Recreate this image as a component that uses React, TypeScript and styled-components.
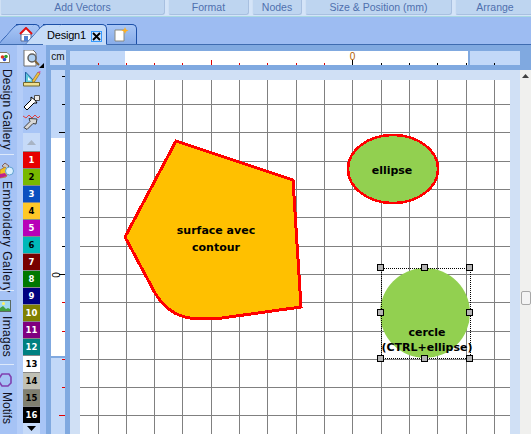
import React from 'react';
import styled, { createGlobalStyle } from 'styled-components';

const GlobalStyle = createGlobalStyle`
  html, body { margin: 0; padding: 0; background: #a0bef3; overflow: hidden; }
  #root { width: 531px; height: 434px; overflow: hidden; }
`;

const RIBBON_GROUPS = [
  { label: 'Add Vectors', width: 165 },
  { label: 'Format', width: 81 },
  { label: 'Nodes', width: 50 },
  { label: 'Size & Position (mm)', width: 147 },
  { label: 'Arrange', width: 80 },
];

const SWATCHES = [
  { n: 1, bg: '#e60000', fg: '#fff' },
  { n: 2, bg: '#78b800', fg: '#000' },
  { n: 3, bg: '#0a4fc0', fg: '#fff' },
  { n: 4, bg: '#ffc828', fg: '#000' },
  { n: 5, bg: '#b800b8', fg: '#fff' },
  { n: 6, bg: '#00b8b8', fg: '#000' },
  { n: 7, bg: '#780000', fg: '#fff' },
  { n: 8, bg: '#007800', fg: '#fff' },
  { n: 9, bg: '#000080', fg: '#fff' },
  { n: 10, bg: '#808000', fg: '#fff' },
  { n: 11, bg: '#800080', fg: '#fff' },
  { n: 12, bg: '#008080', fg: '#fff' },
  { n: 13, bg: '#ffffff', fg: '#000' },
  { n: 14, bg: '#c0c0b4', fg: '#000' },
  { n: 15, bg: '#808070', fg: '#000' },
  { n: 16, bg: '#000000', fg: '#fff' },
];

const GRID_X = [98, 126, 154, 182, 211, 239, 267, 296, 324, 352, 381, 409, 437, 466, 494];
const GRID_Y = [76, 104, 132, 161, 189, 217, 246, 274, 302, 331, 359, 387, 415];
const HANDLES = [[381, 267], [425, 267], [470, 267], [381, 312], [470, 312], [381, 358], [425, 358], [470, 358]];

export default function App() {
  return (
    <Page>
      <GlobalStyle />
      <RibbonLabels>
        {RIBBON_GROUPS.map(group => <RibbonLabel key={group.label} $width={group.width}>{group.label}</RibbonLabel>)}
      </RibbonLabels>
      <TabBand>
        <HomeTab><HomeIcon /></HomeTab>
        <DocumentTab>
          <span>Design1</span>
          <CloseButton>
            <svg width="9" height="9" viewBox="0 0 9 9"><path d="M1 1l7 7M8 1l-7 7" stroke="#000" strokeWidth="1.8" /></svg>
          </CloseButton>
        </DocumentTab>
        <NewTab><NewPageIcon /></NewTab>
      </TabBand>
      <Workspace>
        <GalleryRail>
          <RailItem $height={110} $top={7}>
            <DesignIcon />
            <RailLabel $spacing={0.15} $gap={6}>Design Gallery</RailLabel>
          </RailItem>
          <RailItem $height={136} $top={7}>
            <EmbroideryIcon />
            <RailLabel $spacing={0.5} $gap={2}>Embroidery Gallery</RailLabel>
          </RailItem>
          <RailItem $height={74} $top={9}>
            <ImagesIcon />
            <RailLabel $spacing={0.3} $gap={4}>Images</RailLabel>
          </RailItem>
          <RailItem $height={69} $top={8} $last>
            <MotifIcon />
            <RailLabel $spacing={0} $gap={5}>Motifs</RailLabel>
          </RailItem>
        </GalleryRail>
        <ToolColumn>
          <ToolButton $height={21}><ZoomToolIcon /></ToolButton>
          <ToolButton $height={22}><DrawToolIcon /></ToolButton>
          <ToolButton $height={20}><ArrowToolIcon /></ToolButton>
          <ToolButton $height={20}><NodeToolIcon /></ToolButton>
          <PaletteArrow $height={18}>
            <svg width="9" height="5" viewBox="0 0 9 5"><path d="M4.5 0l4.5 5H0z" fill="#a8b4c4" /></svg>
          </PaletteArrow>
          {SWATCHES.map(swatch => <Swatch key={swatch.n} $bg={swatch.bg} $fg={swatch.fg}>{swatch.n}</Swatch>)}
          <PaletteArrow $height={11}>
            <svg width="9" height="5" viewBox="0 0 9 5"><path d="M0 0h9L4.500 5z" fill="#000" /></svg>
          </PaletteArrow>
        </ToolColumn>
        <Editor>
          <Corner>cm</Corner>
          <HorizontalRuler />
          <VerticalRuler />
          <CanvasFrame>
            <DrawingSheet />
          </CanvasFrame>
          <ScrollBar>
            <ScrollArrow>
              <svg width="7" height="4" viewBox="0 0 7 4"><path d="M3.500 0L7 4H0z" fill="#404040" /></svg>
            </ScrollArrow>
            <ScrollThumb />
          </ScrollBar>
        </Editor>
      </Workspace>
    </Page>
  );
}

function HorizontalRuler() {
  return (
    <HRulerBox>
      <svg width="450" height="14" viewBox="70 51 450 14" shapeRendering="crispEdges">
        {GRID_X.map(x => (
          <line key={x} x1={x + 0.5} x2={x + 0.5} y1={x === 211 || x === 352 ? 60 : 63} y2={65} stroke={x < 352 ? '#e00000' : '#000'} />
        ))}
        <text x="352.500" y="60" textAnchor="middle" fontFamily="Liberation Sans, sans-serif" fontSize="10" fill="#b06000">0</text>
      </svg>
    </HRulerBox>
  );
}

function VerticalRuler() {
  return (
    <VRulerBox>
      <svg width="14" height="364" viewBox="51 70 14 364" shapeRendering="crispEdges">
        {GRID_Y.map(y => (
          <line key={y} x1={y === 132 || y === 274 || y === 415 ? 59 : 62} x2={65} y1={y + 0.5} y2={y + 0.5} stroke={y <= 274 ? '#000' : '#e00000'} />
        ))}
        <text transform="translate(60 275) rotate(-90)" textAnchor="middle" fontFamily="Liberation Sans, sans-serif" fontSize="10" fill="#000">0</text>
      </svg>
    </VRulerBox>
  );
}

function DrawingSheet() {
  return (
    <svg width="430" height="354" viewBox="80 80 430 354">
      <g shapeRendering="crispEdges" stroke="#808080" strokeWidth="1">
        {GRID_X.map(x => <line key={x} x1={x + 0.5} x2={x + 0.5} y1="80" y2="434" />)}
        {GRID_Y.map(y => <line key={y} x1="80" x2="510" y1={y + 0.5} y2={y + 0.5} />)}
      </g>
      <path
        d="M176 141L293 180L301 307L222 318L190 318C176 316 164 308 155 293L125 237Z"
        fill="#ffc000" stroke="#ff0000" strokeWidth="3" shapeRendering="crispEdges"
      />
      <ShapeText x="216" y="234">surface avec</ShapeText>
      <ShapeText x="216" y="251">contour</ShapeText>
      <ellipse cx="393" cy="169" rx="45" ry="34" fill="#92d050" stroke="#ff0000" strokeWidth="2.500" shapeRendering="crispEdges" />
      <ShapeText x="392" y="174">ellipse</ShapeText>
      <circle cx="425" cy="313" r="45" fill="#92d050" />
      <rect x="381.500" y="268.500" width="89" height="90" fill="none" stroke="#000" strokeDasharray="1 1" shapeRendering="crispEdges" />
      <ShapeText x="427" y="336">cercle</ShapeText>
      <ShapeText x="427" y="351">(CTRL+ellipse)</ShapeText>
      {HANDLES.map(([x, y]) => (
        <rect key={`${x}-${y}`} x={x - 3.5} y={y - 2.5} width="6" height="6" fill="#b4b4b4" stroke="#000" shapeRendering="crispEdges" />
      ))}
    </svg>
  );
}

function HomeIcon() {
  return (
    <svg width="14" height="15" viewBox="0 0 14 15">
      <path d="M2 7h10v7H2z" fill="#fff" stroke="#5a6a90" />
      <path d="M1 7l6-6 6 6" fill="#fff" stroke="#e01010" strokeWidth="2" />
      <path d="M5 9h4v5H5z" fill="#5080d0" />
    </svg>
  );
}

function NewPageIcon() {
  return (
    <svg width="15" height="15" viewBox="0 0 15 15">
      <path d="M1 3h9v11H1z" fill="#fff" stroke="#8a8a80" />
      <path d="M11 0l1 2.500 2.500 1-2.500 1-1 2.500-1-2.500-2.500-1 2.500-1z" fill="#ffb020" />
    </svg>
  );
}

function DesignIcon() {
  return (
    <svg width="10" height="11" viewBox="0 0 10 11">
      <path d="M-1 0.500h8l2.500 2.500v7.500H-1z" fill="#fff" stroke="#807868" />
      <circle cx="2.500" cy="5" r="1.800" fill="#e03020" />
      <circle cx="6" cy="4.500" r="1.800" fill="#30a030" />
      <circle cx="4.500" cy="7.500" r="1.800" fill="#3050d0" />
    </svg>
  );
}

function EmbroideryIcon() {
  return (
    <svg width="14" height="17" viewBox="0 0 14 17">
      <path d="M2 4l3-3 4 3-3 3z" fill="#c8c8c8" stroke="#806060" />
      <path d="M0 8l5-3 4 4-3 6-6 1z" fill="#f0c020" stroke="#a07030" strokeWidth="0.700" />
      <path d="M0 12l5-1 2 3-7 2z" fill="#c02090" />
      <circle cx="9.500" cy="9" r="4" fill="#d8f0ff" stroke="#60a0d0" />
    </svg>
  );
}

function ImagesIcon() {
  return (
    <svg width="11" height="12" viewBox="0 0 11 12">
      <rect x="-1" y="0.500" width="11.500" height="11" fill="#a0d8f0" stroke="#5a6a60" />
      <path d="M0 11V8l3-2 3 3 2-1 2 1v2z" fill="#40a040" />
      <circle cx="3.500" cy="3.500" r="1.500" fill="#fff060" />
    </svg>
  );
}

function MotifIcon() {
  return (
    <svg width="12" height="14" viewBox="0 0 12 14">
      <path d="M2 1h7l2 3v6l-3 3H2L-2 7z" fill="none" stroke="#8040b0" strokeWidth="1.600" />
    </svg>
  );
}

function ZoomToolIcon() {
  return (
    <svg width="22" height="19" viewBox="0 0 22 19">
      <path d="M1 0h9l3 3v13H1z" fill="#fff" stroke="#707070" />
      <circle cx="9" cy="8" r="4" fill="#b0d0f0" stroke="#606060" strokeWidth="1.500" />
      <path d="M12 11l4 4" stroke="#806030" strokeWidth="2" />
      <path d="M21 13v5h-5z" fill="#000" />
    </svg>
  );
}

function DrawToolIcon() {
  return (
    <svg width="18" height="16" viewBox="0 0 18 16">
      <path d="M2.500 11.500V1l10 10.500z" fill="#60c8d8" stroke="#2060a0" />
      <path d="M5 9.500V6l3.500 3.500z" fill="#fff" />
      <path d="M0.500 11.500h16v3.500H0.500z" fill="#f0e090" stroke="#706830" />
      <path d="M9 10L15 1l2 1.500-6 9z" fill="#f0c040" stroke="#806020" strokeWidth="0.600" />
      <path d="M15 1l2 1.500L17.500 0z" fill="#e040a0" />
    </svg>
  );
}

function ArrowToolIcon() {
  return (
    <svg width="17" height="17" viewBox="0 -2 17 17">
      <path d="M11.500 0.500h5v5h-5z" fill="#e8e8e8" stroke="#505050" />
      <path d="M12 5L8 2v3L1 12l3 3 7-7h3z" fill="#fff" stroke="#000" />
    </svg>
  );
}

function NodeToolIcon() {
  return (
    <svg width="18" height="18" viewBox="0 0 18 18">
      <path d="M0 3l3 2 3-3 3 3 3-3 3 3 2-2" fill="none" stroke="#e04040" />
      <path d="M14 6l-1 5-3-.500-6 6-3-2 6-6-1-3z" fill="#d8d8d8" stroke="#404040" />
    </svg>
  );
}

const Page = styled.div`
  width: 531px;
  height: 434px;
  display: flex;
  flex-direction: column;
  overflow: hidden;
  font-family: "Liberation Sans", sans-serif;
`;

const RibbonLabels = styled.div`
  display: flex;
  gap: 3px;
  height: 17px;
  flex: none;
  background: #d4e4f8;
  border-bottom: 1px solid #a8d8e0;
  box-sizing: border-box;
`;

const RibbonLabel = styled.div<{ $width: number }>`
  width: ${p => p.$width}px;
  flex: none;
  height: 15px;
  box-sizing: border-box;
  background: #bed5f0;
  border-right: 1px solid #a8c0e0;
  border-bottom: 1px solid #a8c0e0;
  border-left: 1px solid #cfe0f4;
  border-radius: 0 0 3px 3px;
  color: #4f70ae;
  font-size: 10.5px;
  line-height: 14px;
  text-align: center;
  white-space: nowrap;
`;

const TabBand = styled.div`
  height: 28px;
  flex: none;
  box-sizing: border-box;
  background: #9dbcf2;
  border-bottom: 1px solid #3f6cb0;
  display: flex;
  align-items: flex-end;
  padding-left: 16px;
`;

const BaseTab = styled.div`
  position: relative;
  height: 20px;
  box-sizing: border-box;
  display: flex;
  align-items: center;
  flex: none;
  border-top: 1px solid #1c50a8;
  border-right: 1px solid #1c50a8;
  border-radius: 0 5px 0 0;
  background: linear-gradient(#a8c6f6, #88ace8);

  &::before {
    content: '';
    position: absolute;
    top: -1px;
    bottom: 0;
    left: -9px;
    width: 18px;
    transform: skewX(-42deg);
    background: inherit;
    border-top: 1px solid #1c50a8;
    border-left: 1px solid #1c50a8;
    border-radius: 4px 0 0 0;
  }

  & > * { position: relative; }
`;

const HomeTab = styled(BaseTab)`
  width: 24px;
  padding-left: 3px;
`;

const DocumentTab = styled(BaseTab)`
  width: 64px;
  margin-left: 3px;
  padding-left: 4px;
  z-index: 2;
  background: #c6dcf8;
  border-bottom: 1px solid #c6dcf8;
  margin-bottom: -1px;
  height: 21px;
  font-size: 11px;
  letter-spacing: -0.2px;
  color: #000;
`;

const CloseButton = styled.div`
  position: absolute !important;
  right: 4px;
  top: 6px;
  width: 11px;
  height: 11px;
  box-sizing: border-box;
  display: flex;
  align-items: center;
  justify-content: center;
  background: #c8e0fc;
  border: 1px solid #3399ff;
`;

const NewTab = styled(BaseTab)`
  width: 30px;
  justify-content: center;
  &::before { display: none; }
`;

const Workspace = styled.div`
  flex: 1;
  display: flex;
  min-height: 0;
`;

const GalleryRail = styled.div`
  width: 17px;
  flex: none;
  background: #a6c3f5;
  display: flex;
  flex-direction: column;
`;

const RailItem = styled.div<{ $height: number; $top: number; $last?: boolean }>`
  position: relative;
  height: ${p => p.$height}px;
  flex: none;
  box-sizing: border-box;
  padding-top: ${p => p.$top}px;
  display: flex;
  flex-direction: column;
  align-items: flex-start;
  & > svg { flex: none; }

  &::after {
    content: '';
    display: ${p => (p.$last ? 'none' : 'block')};
    position: absolute;
    left: 0;
    bottom: 0;
    width: 14px;
    height: 1px;
    background: #dde9fb;
  }
`;

const RailLabel = styled.div<{ $spacing: number; $gap: number }>`
  writing-mode: vertical-rl;
  margin-top: ${p => p.$gap}px;
  font-size: 12px;
  line-height: 14px;
  letter-spacing: ${p => p.$spacing}px;
  color: #101020;
  white-space: nowrap;
`;

const ToolColumn = styled.div`
  width: 29px;
  flex: none;
  box-sizing: border-box;
  background: linear-gradient(to right, #b4cdf8 6px, #a8c5f6 6px);
  padding: 5px 0 0 6px;
  display: flex;
  flex-direction: column;
  align-items: flex-start;
`;

const ToolButton = styled.div<{ $height: number }>`
  width: 22px;
  height: ${p => p.$height}px;
  flex: none;
  display: flex;
  align-items: flex-start;
  justify-content: flex-start;
`;

const PaletteArrow = styled.div<{ $height: number }>`
  width: 17px;
  height: ${p => p.$height}px;
  flex: none;
  background: #c6daf8;
  display: flex;
  align-items: center;
  justify-content: center;
`;

const Swatch = styled.div<{ $bg: string; $fg: string }>`
  width: 17px;
  height: 17px;
  flex: none;
  box-sizing: border-box;
  background: ${p => p.$bg};
  border-top: 1px solid #888;
  color: ${p => p.$fg};
  font-family: "DejaVu Sans", sans-serif;
  font-size: 8.5px;
  font-weight: bold;
  line-height: 16px;
  text-align: center;
`;

const Editor = styled.div`
  flex: 1;
  min-width: 0;
  background: #80a9e0;
  padding: 6px 0 0 5px;
  display: grid;
  grid-template-columns: 14px 450px 11px;
  grid-template-rows: 14px 364px;
  column-gap: 5px;
  row-gap: 5px;
  overflow: hidden;
`;

const Corner = styled.div`
  background: #c6daf8;
  margin: -1px 0 0 -1px;
  width: 16px;
  height: 15px;
  font-size: 10px;
  line-height: 14px;
  text-align: center;
  color: #101010;
`;

const HRulerBox = styled.div`
  width: 450px;
  height: 14px;
  background: linear-gradient(to right, #c2d8f8 55px, #fff 55px, #fff 398px, #80a9e0 398px, #80a9e0 400px, #c2d8f8 400px);
  & > svg { display: block; overflow: visible; }
`;

const VRulerBox = styled.div`
  grid-column: 1;
  grid-row: 2;
  height: 364px;
  background: linear-gradient(to bottom, #c2d8f8 68px, #fff 68px, #fff 286px, #80a9e0 286px, #80a9e0 288px, #c2d8f8 288px);
  & > svg { display: block; overflow: visible; }
`;

const CanvasFrame = styled.div`
  grid-column: 2;
  grid-row: 2;
  background: #d0e0f5;
  padding: 10px 10px 0;
  overflow: hidden;
  & > svg { display: block; background: #fff; }
`;

const ScrollBar = styled.div`
  grid-column: 3;
  grid-row: 2;
  position: relative;
  margin-left: -5px;
  background: #f0f0ee;
  width: 11px;
  height: 364px;
`;

const ScrollArrow = styled.div`
  height: 12px;
  display: flex;
  align-items: center;
  justify-content: center;
`;

const ScrollThumb = styled.div`
  position: absolute;
  left: 1px;
  top: 221px;
  width: 10px;
  height: 14px;
  box-sizing: border-box;
  background: #f4f4f4;
  border: 1px solid #a8a8a8;
  border-radius: 2px;
`;

const ShapeText = styled.text`
  font-family: "DejaVu Sans", sans-serif;
  font-size: 11px;
  font-weight: bold;
  fill: #000;
  text-anchor: middle;
`;
